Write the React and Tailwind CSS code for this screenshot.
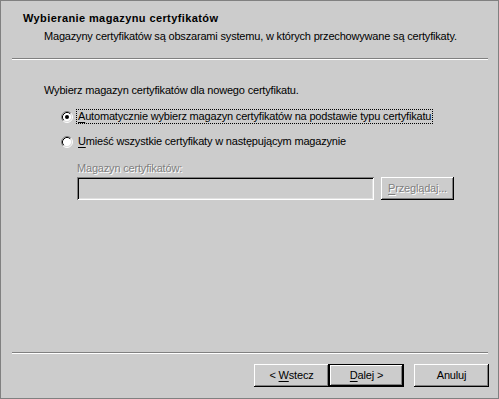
import React from "react";

function Radio({ checked }) {
  return (
    <svg width="12" height="12" viewBox="0 0 12 12" className="shrink-0">
      <circle cx="6" cy="6" r="4.5" fill="#ffffff" />
      <path d="M2.11 9.89 A5.5 5.5 0 0 1 9.89 2.11" fill="none" stroke="#808080" strokeWidth="1" />
      <path d="M9.89 2.11 A5.5 5.5 0 0 1 2.11 9.89" fill="none" stroke="#ffffff" strokeWidth="1" />
      <path d="M2.82 9.18 A4.5 4.5 0 0 1 9.18 2.82" fill="none" stroke="#000000" strokeWidth="1" />
      <path d="M9.18 2.82 A4.5 4.5 0 0 1 2.82 9.18" fill="none" stroke="#dfdfdf" strokeWidth="1" />
      {checked && <circle cx="6" cy="6" r="2" fill="#000000" />}
    </svg>
  );
}

const btn =
  "h-[23px] w-[75px] flex items-center justify-center text-[11px] leading-[13px] bg-[#cccccc] shadow-[inset_-1px_-1px_0_#000,inset_1px_1px_0_#fff,inset_-2px_-2px_0_#808080]";

export default function App() {
  return (
    <div className="w-[499px] h-[399px] border border-[#808080] bg-[#cccccc] flex flex-col font-['Liberation_Sans',Arial,sans-serif] text-[11px] leading-[13px] text-black tracking-[-0.18px] select-none">
      {/* Header */}
      <div className="pl-[22px] mt-[11px] font-bold tracking-[0.4px]">Wybieranie magazynu certyfikatów</div>
      <div className="pl-[43px] mt-[5px]">
        Magazyny certyfikatów są obszarami systemu, w których przechowywane są certyfikaty.
      </div>
      <div className="ml-[11px] mr-[10px] mt-[15px] h-[2px] border-t border-t-[#808080] border-b border-b-white" />

      {/* Content */}
      <div className="pl-[43px] mt-[24px]">Wybierz magazyn certyfikatów dla nowego certyfikatu.</div>
      <div className="pl-[60px] mt-[12px] flex items-center gap-[3px]">
        <Radio checked />
        <span className="border border-dotted border-black px-[1px]">
          <u className="underline-offset-[2px]">A</u>utomatycznie wybierz magazyn certyfikatów na podstawie typu certyfikatu
        </span>
      </div>
      <div className="pl-[60px] mt-[10px] flex items-center gap-[3px]">
        <Radio />
        <span className="border border-transparent px-[1px]">
          <u className="underline-offset-[2px]">U</u>mieść wszystkie certyfikaty w następującym magazynie
        </span>
      </div>
      <div className="pl-[76px] mt-[13px] text-[#808080] [text-shadow:1px_1px_0_#fff]">Magazyn certyfikatów:</div>
      <div className="pl-[76px] mt-[2px] flex items-center gap-[7px]">
        <div className="w-[297px] h-[23px] bg-[#cccccc] shadow-[inset_1px_1px_0_#808080,inset_-1px_-1px_0_#fff,inset_2px_2px_0_#000,inset_-2px_-2px_0_#dfdfdf]" />
        <div className={btn + " !w-[73px] text-[#808080] [text-shadow:1px_1px_0_#fff]"}>
          <span>
            <u className="underline-offset-[2px]">P</u>rzeglądaj...
          </span>
        </div>
      </div>

      <div className="flex-1" />

      {/* Footer */}
      <div className="ml-[11px] mr-[10px] h-[2px] border-t border-t-[#808080] border-b border-b-white" />
      <div className="mt-[10px] mb-[11px] pr-[9px] flex justify-end text-black">
        <div className={btn}>
          <span>
            &lt; <u className="underline-offset-[2px]">W</u>stecz
          </span>
        </div>
        <div className={btn + " border border-black"}>
          <span>
            <u className="underline-offset-[2px]">D</u>alej &gt;
          </span>
        </div>
        <div className={btn + " ml-[10px]"}>
          <span>Anuluj</span>
        </div>
      </div>
    </div>
  );
}
